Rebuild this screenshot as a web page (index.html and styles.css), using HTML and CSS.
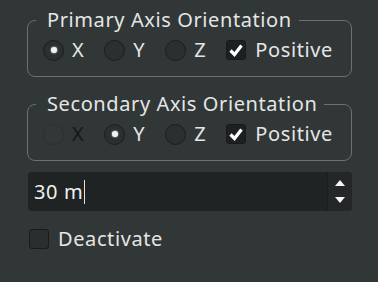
FILE: index.html
```html
<!DOCTYPE html>
<html lang="en">
<head>
    <meta charset="UTF-8">
    <title>Axis Orientation</title>
    <link rel="stylesheet" href="styles.css">
</head>
<body>
    <div class="panel">
        <fieldset class="grupo">
            <legend>Primary Axis Orientation</legend>
            <div class="fila">
                <span class="opcion"><span class="radio marcado"></span>X</span>
                <span class="opcion"><span class="radio"></span>Y</span>
                <span class="opcion"><span class="radio"></span>Z</span>
                <span class="opcion positivo"><span class="check marcado"><svg viewBox="0 0 20 20" width="20" height="20"><path d="M4.5 10.5 L8.5 14.5 L15.5 5.5" fill="none" stroke="#fff" stroke-width="3.2"/></svg></span>Positive</span>
            </div>
        </fieldset>

        <fieldset class="grupo">
            <legend>Secondary Axis Orientation</legend>
            <div class="fila">
                <span class="opcion apagada"><span class="radio"></span>X</span>
                <span class="opcion"><span class="radio marcado"></span>Y</span>
                <span class="opcion"><span class="radio"></span>Z</span>
                <span class="opcion positivo"><span class="check marcado"><svg viewBox="0 0 20 20" width="20" height="20"><path d="M4.5 10.5 L8.5 14.5 L15.5 5.5" fill="none" stroke="#fff" stroke-width="3.2"/></svg></span>Positive</span>
            </div>
        </fieldset>

        <div class="spin">
            <div class="valor">30 m<span class="cursor"></span></div>
            <div class="flechas">
                <span class="arriba"></span>
                <span class="abajo"></span>
            </div>
        </div>

        <div class="opcion desactivar"><span class="check"></span>Deactivate</div>
    </div>
</body>
</html>
```

FILE: styles.css
```css
body {
    margin: 0;
    background-color: #313636;
    font-family: "Noto Sans", sans-serif;
    font-size: 20px;
    letter-spacing: 0.6px;
    color: #e4e6e6;
    height: 282px;
    overflow: hidden;
}
.panel {
    padding: 8px 26px 0 27px;
}
.grupo {
    margin: 0 0 15px 0;
    padding: 6px 8px 14px 8px;
    border: 1px solid #6b7070;
    border-radius: 8px;
}
.grupo legend {
    padding: 0 7px 0 11px;
    line-height: 24px;
}
.fila {
    display: flex;
    align-items: center;
    gap: 20px;
    padding-left: 7px;
    height: 24px;
}
.opcion {
    display: flex;
    align-items: center;
    gap: 8px;
    line-height: 24px;
}
.positivo {
    gap: 9px;
}
.apagada {
    color: #161818;
}
.apagada .radio {
    background: #323737;
    border-color: #2c3030;
}
.radio {
    width: 19px;
    height: 19px;
    border-radius: 50%;
    background: #2b2f2f;
    border: 1px solid #1a1d1d;
    display: flex;
    align-items: center;
    justify-content: center;
}
.radio.marcado::after {
    content: "";
    width: 6px;
    height: 6px;
    border-radius: 50%;
    background: #f2f2f2;
    box-shadow: 0 0 2px #fff;
}
.check {
    width: 18px;
    height: 18px;
    border-radius: 3px;
    background: #2a2e2e;
    border: 1px solid #181b1b;
    display: flex;
}
.check.marcado {
    background: #1d2020;
}
.check svg {
    margin: -1px;
}
.spin {
    display: flex;
    height: 39px;
    margin: -4px 0 0 1px;
    border-radius: 4px;
    overflow: hidden;
    background: #1f2323;
}
.valor {
    flex: 1;
    display: flex;
    align-items: center;
    padding-left: 6px;
    color: #f0f0f0;
}
.cursor {
    width: 1px;
    height: 24px;
    background: #e0e0e0;
    margin-left: 1px;
}
.flechas {
    width: 24px;
    background: #232727;
    border-left: 1px solid #1a1d1d;
    display: flex;
    flex-direction: column;
    align-items: center;
    justify-content: center;
    gap: 11px;
}
.arriba {
    border-left: 5px solid transparent;
    border-right: 5px solid transparent;
    border-bottom: 6px solid #f4f4f4;
}
.abajo {
    border-left: 5px solid transparent;
    border-right: 5px solid transparent;
    border-top: 6px solid #f4f4f4;
}
.desactivar {
    margin: 16px 0 0 2px;
    gap: 9px;
}
```
